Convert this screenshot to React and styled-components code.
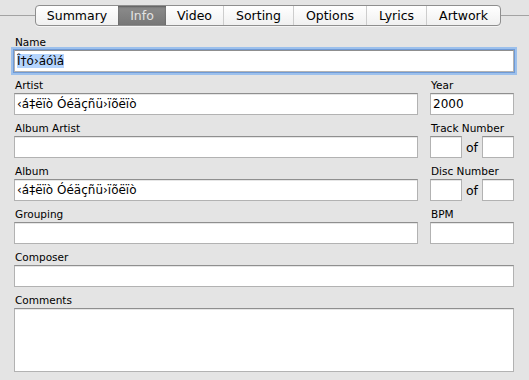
import React from "react";
import styled, { createGlobalStyle } from "styled-components";

const GlobalStyle = createGlobalStyle`
  html, body {
    margin: 0;
    padding: 0;
    background: #e4e4e4;
  }
  body {
    font-family: "DejaVu Sans", "Liberation Sans", sans-serif;
    color: #000;
  }
`;

const Window = styled.div`
  width: 529px;
  height: 380px;
  background: #e4e4e4;
  overflow: hidden;
`;

const TabRow = styled.div`
  display: flex;
  align-items: center;
  padding-top: 5px;
`;

const Rule = styled.div`
  height: 1px;
  background: #a3a3a3;
  flex: ${(props) => (props.grow ? 1 : "none")};
  width: ${(props) => (props.grow ? "auto" : "35px")};
`;

const TabBar = styled.div`
  display: flex;
  height: 21px;
  box-sizing: border-box;
  border: 1px solid #8e8e8e;
  border-radius: 4px;
  background: linear-gradient(#ffffff, #f0f0f0);
  overflow: hidden;
  box-shadow: 0 1px 0 rgba(255, 255, 255, 0.6);
`;

const Tab = styled.div`
  display: flex;
  align-items: center;
  justify-content: center;
  width: ${(props) => props.w}px;
  font-size: 12.5px;
  color: ${(props) => (props.active ? "#e2e2e2" : "#000")};
  background: ${(props) =>
    props.active ? "linear-gradient(#8c8c8c, #777777)" : "transparent"};
  box-shadow: ${(props) =>
    props.active ? "inset 0 1px 2px rgba(0,0,0,0.35)" : "none"};
  border-left: ${(props) =>
    props.first || props.active || props.afterActive
      ? "none"
      : "1px solid #cdcdcd"};
`;

const Form = styled.div`
  display: grid;
  grid-template-columns: 404px 84px;
  column-gap: 12px;
  row-gap: 6px;
  padding: 9px 15px 0 14px;
`;

const Field = styled.div`
  grid-column: ${(props) => (props.wide ? "1 / span 2" : "auto")};
  display: flex;
  flex-direction: column;
`;

const Label = styled.div`
  font-size: 10.5px;
  line-height: 14px;
  height: 14px;
  margin-bottom: 1px;
  padding-left: 1px;
`;

const Box = styled.div`
  box-sizing: border-box;
  height: ${(props) => props.h || 22}px;
  width: ${(props) => (props.w ? `${props.w}px` : "auto")};
  background: #fff;
  border: 1px solid #b2b2b2;
  border-top-color: #8f8f8f;
  box-shadow: ${(props) =>
    props.focused
      ? "0 0 0 1px #6f9ad6, 0 0 0 3px #9cc0ec"
      : "inset 0 1px 0 #e6e6e6"};
  font-size: 12px;
  line-height: 20px;
  padding: 0 2px;
  white-space: nowrap;
  overflow: hidden;
`;

const Selected = styled.span`
  background: #b5d5fe;
`;

const NumberRow = styled.div`
  display: flex;
  align-items: center;
`;

const Of = styled.span`
  font-size: 12.5px;
  width: 20px;
  text-align: center;
`;

const tabs = [
  ["Summary", 82],
  ["Info", 48],
  ["Video", 57],
  ["Sorting", 69],
  ["Options", 72],
  ["Lyrics", 59],
  ["Artwork", 73],
];

const NumberPair = () => (
  <NumberRow>
    <Box w={32} />
    <Of>of</Of>
    <Box w={32} />
  </NumberRow>
);

export default function App() {
  return (
    <Window>
      <GlobalStyle />
      <TabRow>
        <Rule />
        <TabBar>
          {tabs.map(([name, w], i) => (
            <Tab
              key={name}
              w={w}
              first={i === 0}
              active={name === "Info"}
              afterActive={i > 0 && tabs[i - 1][0] === "Info"}
            >
              {name}
            </Tab>
          ))}
        </TabBar>
        <Rule grow />
      </TabRow>
      <Form>
        <Field wide>
          <Label>Name</Label>
          <Box focused>
            <Selected>Î†ó›áóìá</Selected>
          </Box>
        </Field>

        <Field>
          <Label>Artist</Label>
          <Box>‹á‡ëïò Óéäçñü›ïõëïò</Box>
        </Field>
        <Field>
          <Label>Year</Label>
          <Box>2000</Box>
        </Field>

        <Field>
          <Label>Album Artist</Label>
          <Box />
        </Field>
        <Field>
          <Label>Track Number</Label>
          <NumberPair />
        </Field>

        <Field>
          <Label>Album</Label>
          <Box>‹á‡ëïò Óéäçñü›ïõëïò</Box>
        </Field>
        <Field>
          <Label>Disc Number</Label>
          <NumberPair />
        </Field>

        <Field>
          <Label>Grouping</Label>
          <Box />
        </Field>
        <Field>
          <Label>BPM</Label>
          <Box />
        </Field>

        <Field wide>
          <Label>Composer</Label>
          <Box />
        </Field>

        <Field wide>
          <Label>Comments</Label>
          <Box h={64} />
        </Field>
      </Form>
    </Window>
  );
}
